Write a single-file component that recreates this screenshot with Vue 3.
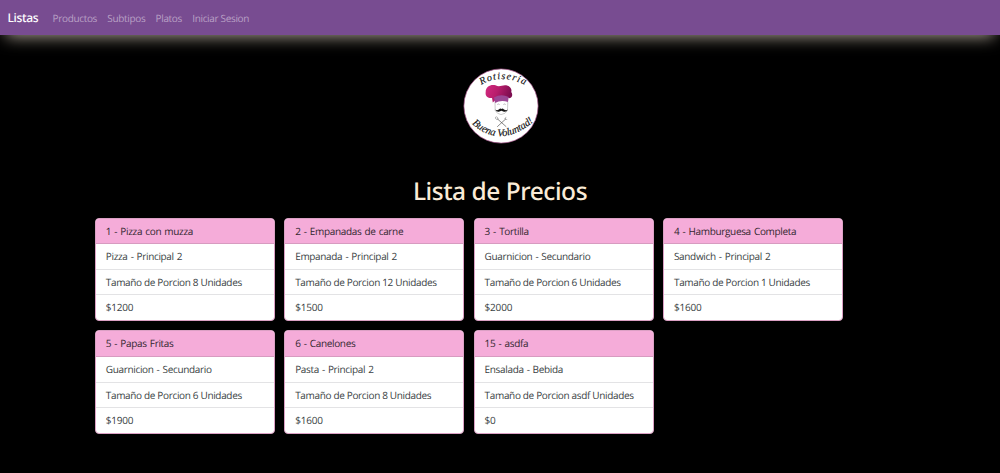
<script setup>
const links = ['Productos', 'Subtipos', 'Platos', 'Iniciar Sesion']
const dishes = [
  { id: 1, name: 'Pizza con muzza', kind: 'Pizza - Principal 2', size: '8', price: 1200 },
  { id: 2, name: 'Empanadas de carne', kind: 'Empanada - Principal 2', size: '12', price: 1500 },
  { id: 3, name: 'Tortilla', kind: 'Guarnicion - Secundario', size: '6', price: 2000 },
  { id: 4, name: 'Hamburguesa Completa', kind: 'Sandwich - Principal 2', size: '1', price: 1600 },
  { id: 5, name: 'Papas Fritas', kind: 'Guarnicion - Secundario', size: '6', price: 1900 },
  { id: 6, name: 'Canelones', kind: 'Pasta - Principal 2', size: '8', price: 1600 },
  { id: 15, name: 'asdfa', kind: 'Ensalada - Bebida', size: 'asdf', price: 0 },
]
</script>

<template>
  <div class="page">
    <nav class="navbar">
      <a class="brand">Listas</a>
      <a v-for="l in links" :key="l" class="link">{{ l }}</a>
    </nav>

    <svg class="logo" viewBox="0 0 76 76" width="76" height="76">
      <defs>
        <linearGradient id="hat" x1="0" y1="0" x2="1" y2="0.3">
          <stop offset="0" stop-color="#d42a80" />
          <stop offset="0.5" stop-color="#b81d6c" />
          <stop offset="1" stop-color="#7d0d50" />
        </linearGradient>
        <path id="top-arc" d="M18.3 17 Q38.5 4.5 64 18" />
        <path id="bottom-arc" d="M8.8 55.6 Q38 83 74 51" />
      </defs>
      <circle cx="38" cy="38" r="37.1" fill="#fff" stroke="#a8568c" stroke-width="0.7" />
      <text class="script top"><textPath href="#top-arc">Rotiseria</textPath></text>
      <path d="M29.8 34.5 L29 30 C24.5 30.5 22 27.6 22.7 24 C22.5 18.6 28 15.8 32.5 17.3 C37 19.7 40 16 44.7 17.8 C48 19 49 21.5 48.2 24 C50 26 49.4 29.5 46.5 30.2 L41 28.5 L34 30.5 Z" fill="url(#hat)" />
      <path d="M31 29.5 Q38 25.5 45.7 29 L45 34 Q38 31.5 32 35 Z" fill="#9b4795" />
      <path d="M32 34.5 L32.2 42.5 Q34 46 38 46.6 Q42.5 46 44.5 42.5 L44.8 34" fill="none" stroke="#999" stroke-width="0.5" />
      <path d="M34.3 36.5 q1.2 -1 2.3 0 M40.4 36.5 q1.2 -1 2.3 0" fill="none" stroke="#777" stroke-width="0.5" />
      <path d="M32.1 41.5 Q34 43 35.8 41.4 Q37.5 40 38.4 41 Q39.4 40 41 41.4 Q43 43 44.9 41.5 Q43.5 44.5 40.3 43.6 L38.4 42.8 L36.5 43.6 Q33.5 44.5 32.1 41.5 Z" fill="#161616" />
      <path d="M34.2 50.7 L43.3 58.8 M43 50.7 L34.2 58.8" stroke="#555" stroke-width="0.7" />
      <ellipse cx="33.7" cy="50.2" rx="1.1" ry="1.5" transform="rotate(-45 33.7 50.2)" fill="none" stroke="#777" stroke-width="0.5" />
      <path d="M41.6 50.2 l1 1.2 1.6 .1 M43 48.9 l-.8 2" fill="none" stroke="#777" stroke-width="0.5" />
      <text class="script bottom"><textPath href="#bottom-arc">Buena Voluntad!</textPath></text>
    </svg>

    <h1>Lista de Precios</h1>

    <main class="grid">
      <article v-for="d in dishes" :key="d.id" class="card">
        <header><span>{{ d.id }} - {{ d.name }}</span></header>
        <p class="kind"><span>{{ d.kind }}</span></p>
        <p><span>Tamaño de Porcion {{ d.size }} Unidades</span></p>
        <p class="price"><span>${{ d.price }}</span></p>
      </article>
    </main>
  </div>
</template>

<style>
body {
  background: #000;
}
</style>

<style scoped>
.page {
  height: 473px;
  overflow: hidden;
  background: #000;
  font-family: "Open Sans", "Noto Sans", sans-serif;
  font-size: 10px;
  letter-spacing: -0.34px;
  text-rendering: geometricPrecision;
  display: flex;
  flex-direction: column;
}
.navbar {
  height: 35px;
  flex: none;
  display: flex;
  align-items: center;
  padding-left: 7.5px;
  background: #784c91;
  box-shadow: 0 8px 16px -6px rgba(250, 235, 215, 0.66);
}
.brand {
  color: #fff;
  font-family: "Noto Sans", sans-serif;
  font-weight: 500;
  font-size: 12px;
  width: 45px;
  line-height: 36px;
}
.link {
  color: #b8a0c5;
  line-height: 36px;
  margin-right: 10.2px;
  letter-spacing: -0.33px;
  white-space: nowrap;
}
.logo {
  flex: none;
  margin: 33px 0 0 462.5px;
}
.script {
  font-family: "Liberation Serif", serif;
  font-style: italic;
  fill: #111;
  stroke: #111;
  stroke-width: 0.15px;
}
.top {
  font-size: 10px;
  letter-spacing: 1.1px;
}
.bottom {
  font-size: 10.5px;
  letter-spacing: -0.1px;
}
h1 {
  margin: 32px 0 0;
  height: 41.5px;
  line-height: 31px;
  text-align: center;
  color: #faebd7;
  font-family: "Noto Sans", sans-serif;
  font-size: 24.5px;
  font-weight: 500;
  letter-spacing: -0.45px;
}
.grid {
  display: grid;
  grid-template-columns: repeat(4, 180px);
  gap: 9.6px 9.4px;
  padding-left: 95px;
}
.card {
  box-sizing: border-box;
  height: 103.4px;
  border: 1px solid #dba0c4;
  border-radius: 4px;
  overflow: hidden;
  background: #fff;
  color: #3a3f44;
}
.card header,
.card p {
  box-sizing: border-box;
  height: 25.6px;
  margin: 0;
  padding-left: 9.8px;
  line-height: 25px;
  border-bottom: 1px solid #e3e3e5;
  white-space: nowrap;
}
.card p {
  line-height: 25.3px;
}
.card header {
  background: #f5acd9;
  color: #33272f;
  border-bottom-color: #d79bc0;
  word-spacing: 0.9px;
}
.card .kind {
  word-spacing: 0.8px;
}
.card .price {
  letter-spacing: -0.2px;
  border-bottom: 0;
}
</style>
